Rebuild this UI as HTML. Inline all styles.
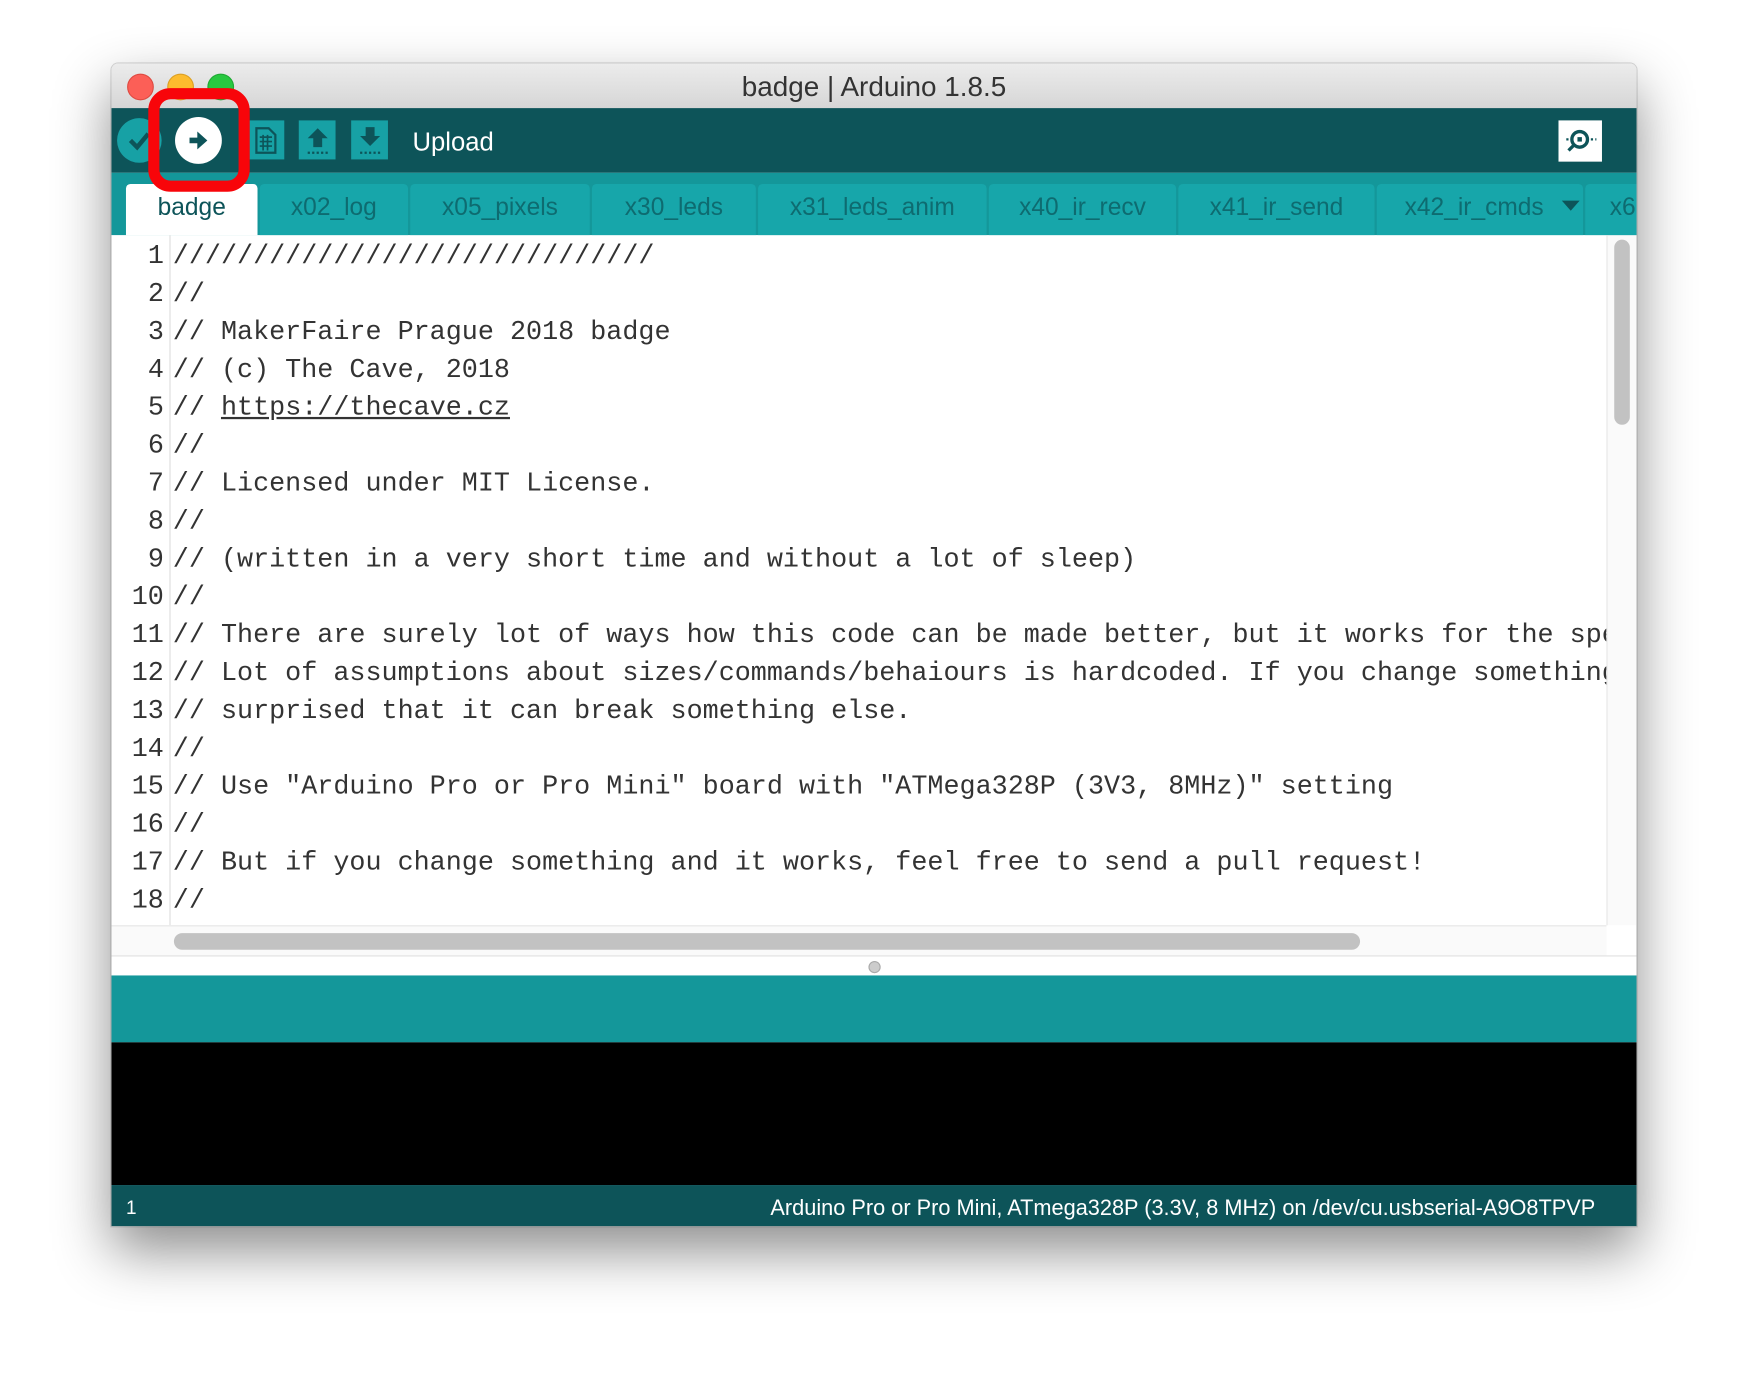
<!DOCTYPE html>
<html><head><meta charset="utf-8">
<style>
html,body{margin:0;padding:0;background:#fff;width:1748px;height:1386px;overflow:hidden}
#s{position:absolute;left:0;top:0;width:1568px;height:1243px;transform:scale(1.11480);transform-origin:0 0;font-family:"Liberation Sans",sans-serif}
.a{position:absolute}
#win{left:100px;top:57px;width:1368px;height:1043px;background:#fff;box-shadow:0 22px 50px rgba(0,0,0,.45),0 0 0 1px rgba(0,0,0,.15);overflow:hidden;border-radius:6px 6px 0 0}
#title{left:0;top:0;width:1368px;height:40px;background:linear-gradient(#ececec,#d6d6d6);border-bottom:1px solid #b5b5b5;text-align:center;line-height:42px;font-size:25px;color:#333}
.dot{width:22px;height:22px;border-radius:50%;top:9px}
#tb{left:0;top:40px;width:1368px;height:58px;background:#0d5459}
.sq{background:#17a1a5;width:33px;height:35px;top:11px}
#tabs{left:0;top:98px;width:1368px;height:56px;background:#14979a}
.tab{top:10px;height:46px;background:#17a6aa;color:#0e6b70;font-size:22px;text-align:center;line-height:42px;border-radius:4px 4px 0 0}
#ed{left:0;top:154px;width:1341px;height:619px;background:#fff}
.ln{position:absolute;left:0;width:47px;text-align:right;font-family:"Liberation Mono",monospace;font-size:24px;color:#333}
.cd{position:absolute;left:55px;font-family:"Liberation Mono",monospace;font-size:24px;color:#333;white-space:pre}
</style></head><body><div id="s">
<div id="win" class="a">
 <div id="title" class="a">badge | Arduino 1.8.5</div>
 <div class="a dot" style="left:14px;background:#fc5f57;border:1px solid #de4a41"></div>
 <div class="a dot" style="left:50px;background:#fdbc2e;border:1px solid #dca024"></div>
 <div class="a dot" style="left:86px;background:#28c840;border:1px solid #1fa934"></div>
 <div id="tb" class="a">
  <div class="a" style="left:5px;top:9px;width:40px;height:40px;border-radius:50%;background:#17a1a5"></div>
  <svg class="a" style="left:14px;top:19px" width="22" height="20"><path d="M3 10 L9 16 L19 4" stroke="#0d5459" stroke-width="4" fill="none"/></svg>
  <div class="a" style="left:57px;top:8px;width:42px;height:42px;border-radius:50%;background:#fff"></div>
  <svg class="a" style="left:65px;top:16px" width="26" height="26"><path d="M5 13 H14" stroke="#0d5459" stroke-width="5"/><path d="M12 5 L21 13 L12 21 Z" fill="#0d5459"/></svg>
  <div class="a sq" style="left:122px"></div>
  <svg class="a" style="left:127px;top:16px" width="24" height="26"><path d="M3 2 H14 L20 8 V24 H3 Z" fill="none" stroke="#0d5459" stroke-width="2"/><path d="M6 10 H17 M6 14 H17 M6 18 H17 M9 8 V22 M13 8 V22" stroke="#0d5459" stroke-width="1.5"/></svg>
  <div class="a sq" style="left:168px"></div>
  <svg class="a" style="left:172px;top:15px" width="26" height="28"><path d="M13 3 L22 12 H17 V20 H9 V12 H4 Z" fill="#0d5459"/><path d="M4 25 H22" stroke="#0d5459" stroke-width="2" stroke-dasharray="2 2"/></svg>
  <div class="a sq" style="left:215px"></div>
  <svg class="a" style="left:219px;top:15px" width="26" height="28"><path d="M9 2 H17 V10 H22 L13 19 L4 10 H9 Z" fill="#0d5459"/><path d="M4 25 H22" stroke="#0d5459" stroke-width="2" stroke-dasharray="2 2"/></svg>
  <div class="a" style="left:270px;top:17px;color:#fff;font-size:23px">Upload</div>
  <div class="a" style="left:1298px;top:11px;width:39px;height:37px;background:#fff"></div>
  <svg class="a" style="left:1302px;top:14px" width="32" height="32"><circle cx="15" cy="14" r="7" fill="none" stroke="#0d5459" stroke-width="3"/><rect x="13" y="12" width="4" height="4" fill="#0d5459"/><path d="M10 19 L5 24" stroke="#0d5459" stroke-width="3"/><path d="M3 14 H5 M25 14 H30" stroke="#0d5459" stroke-width="2" stroke-dasharray="2 2"/></svg>
 </div>
 <div id="tabs" class="a">
  <div class="a tab" style="left:13px;width:118px;background:#fff;color:#0d5459">badge</div>
  <div class="a tab" style="left:133px;width:133px">x02_log</div>
  <div class="a tab" style="left:268px;width:161px">x05_pixels</div>
  <div class="a tab" style="left:431px;width:147px">x30_leds</div>
  <div class="a tab" style="left:580px;width:205px">x31_leds_anim</div>
  <div class="a tab" style="left:787px;width:168px">x40_ir_recv</div>
  <div class="a tab" style="left:957px;width:176px">x41_ir_send</div>
  <div class="a tab" style="left:1135px;width:185px;text-align:left;padding-left:25px;box-sizing:border-box">x42_ir_cmds</div>
  <svg class="a" style="left:1300px;top:24px" width="18" height="12"><path d="M1 1 H17 L9 10 Z" fill="#0d5459"/></svg>
  <div class="a tab" style="left:1322px;width:60px;text-align:left;padding-left:22px;box-sizing:border-box">x6</div>
 </div>
 <div id="ed" class="a">
  <div class="a" style="left:52px;top:0;width:1px;height:619px;background:#ddd"></div>
  <div id="lines"></div>
 </div>
 <div class="a" style="left:1341px;top:154px;width:27px;height:619px;background:#fafafa;border-left:1px solid #e6e6e6"></div>
 <div class="a" style="left:1348px;top:158px;width:14px;height:166px;border-radius:7px;background:#c2c2c2"></div>
 <div class="a" style="left:0;top:773px;width:1341px;height:27px;background:#fafafa;border-top:1px solid #e6e6e6"></div>
 <div class="a" style="left:56px;top:780px;width:1064px;height:15px;border-radius:8px;background:#c2c2c2"></div>
 <div class="a" style="left:0;top:800px;width:1368px;height:1px;background:#e0e0e0"></div>
 <div class="a" style="left:679px;top:805px;width:9px;height:9px;border-radius:50%;background:#ccc;border:1px solid #aaa"></div>
 <div class="a" style="left:0;top:818px;width:1368px;height:60px;background:#14979a"></div>
 <div class="a" style="left:0;top:878px;width:1368px;height:128px;background:#000"></div>
 <div class="a" style="left:0;top:1006px;width:1368px;height:37px;background:#0d5459;color:#fff;font-size:19.5px;line-height:42px">
  <span class="a" style="left:13px;top:0;font-size:17px">1</span>
  <span class="a" style="right:37px;top:0;white-space:nowrap">Arduino Pro or Pro Mini, ATmega328P (3.3V, 8 MHz) on /dev/cu.usbserial-A9O8TPVP</span>
 </div>
</div>
<div class="a" style="left:133px;top:79px;width:71px;height:73px;border:10px solid #f8050a;border-radius:20px"></div>
</div>
<script>
var L=["//////////////////////////////","//","// MakerFaire Prague 2018 badge","// (c) The Cave, 2018","// <u>https://thecave.cz</u>","//","// Licensed under MIT License.","//","// (written in a very short time and without a lot of sleep)","//","// There are surely lot of ways how this code can be made better, but it works for the spe","// Lot of assumptions about sizes/commands/behaiours is hardcoded. If you change something","// surprised that it can break something else.","//","// Use \"Arduino Pro or Pro Mini\" board with \"ATMega328P (3V3, 8MHz)\" setting","//","// But if you change something and it works, feel free to send a pull request!","//"];
var h="";for(var i=0;i<L.length;i++){var t=6+i*34;h+='<div class="ln" style="top:'+t+'px">'+(i+1)+'</div><div class="cd" style="top:'+t+'px;width:1286px;overflow:hidden">'+L[i]+'</div>';}
document.getElementById("lines").innerHTML=h;
</script>
</body></html>
